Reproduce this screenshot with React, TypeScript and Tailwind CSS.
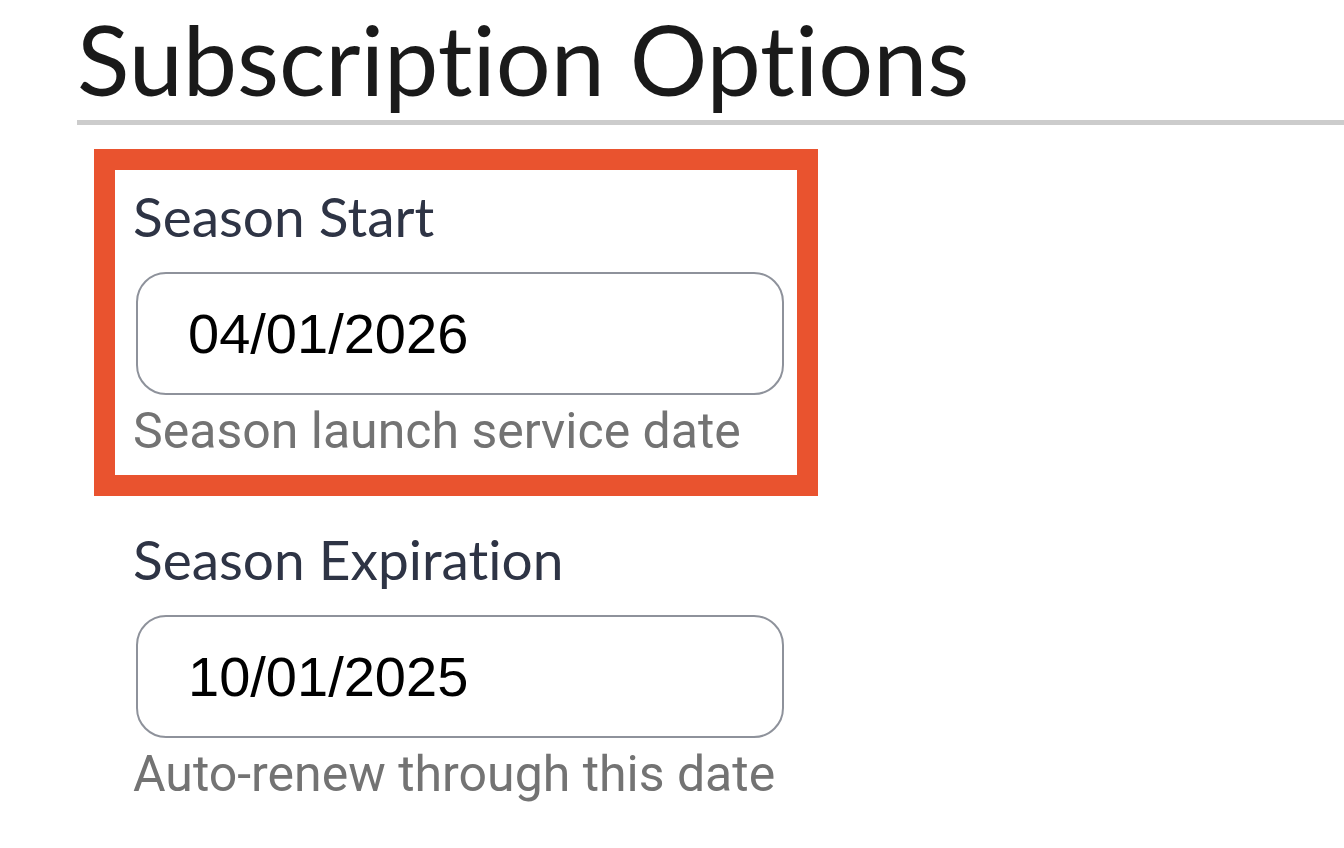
export default function App() {
  const Field = ({ label, value, help, highlight }: { label: string; value: string; help: string; highlight?: boolean }) => (
    <div
      className={
        "ml-[38px] w-[682px] pl-[18px] pr-[13px] pt-[14px] pb-[14px] bg-white " +
        (highlight ? "outline-[21px] outline-solid outline-[#e9532f]" : "")
      }
    >
      <div
        className="text-[55px] leading-[64px] text-[#2e3445] [font-variant-ligatures:none]"
        style={{ fontFamily: '"Lato", sans-serif' }}
      >
        {label}
      </div>
      <div className="mt-[24px] ml-[3px] h-[123px] rounded-[30px] border-2 border-[#8e929b] flex items-center pl-[50px]">
        <span
          className="text-[56px] text-black leading-none"
          style={{ fontFamily: '"Liberation Sans", Arial, sans-serif' }}
        >
          {value}
        </span>
      </div>
      <div
        className="mt-[6px] text-[50px] leading-[60px] text-[#737373]"
        style={{ fontFamily: '"Roboto", sans-serif' }}
      >
        {help}
      </div>
    </div>
  );

  return (
    <div className="w-[1344px] h-[848px] bg-white overflow-hidden pl-[77px]">
      <h1
        className="pt-[6px] text-[97px] leading-[106px] text-[#1a1a1a] font-normal [font-variant-ligatures:none]"
        style={{ fontFamily: '"Lato", sans-serif' }}
      >
        Subscription Options
      </h1>
      <div className="mt-[8px] h-[5px] bg-[#cccccc]" />
      <div className="pt-[45px] flex flex-col gap-[38px]">
        <Field label="Season Start" value="04/01/2026" help="Season launch service date" highlight />
        <Field label="Season Expiration" value="10/01/2025" help="Auto-renew through this date" />
      </div>
    </div>
  );
}
